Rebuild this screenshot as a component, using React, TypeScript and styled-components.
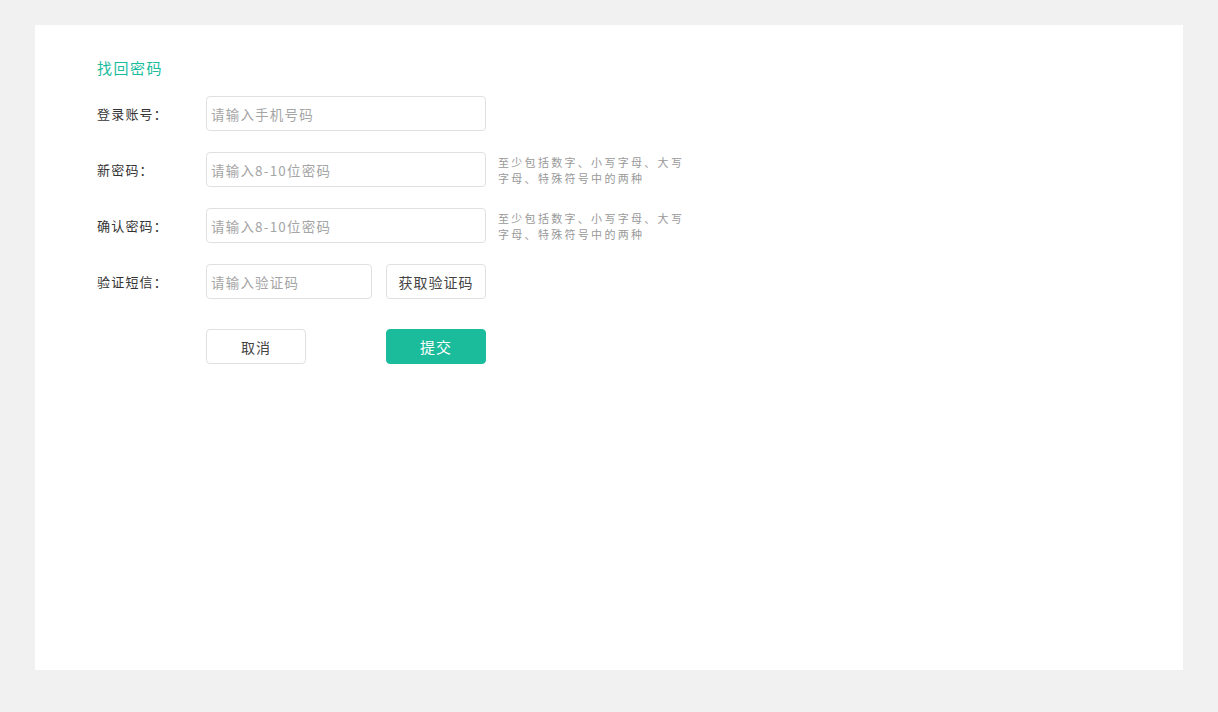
import React from "react";
import styled, { createGlobalStyle } from "styled-components";

const Global = createGlobalStyle`
  html, body { margin: 0; padding: 0; background: #f1f1f1; }
  body { font-family: "Noto Sans CJK SC", "Liberation Sans", sans-serif; }
  * { box-sizing: border-box; }
`;

const Page = styled.div`
  padding: 25px 35px 42px;
`;

const Panel = styled.div`
  background: #fff;
  height: 645px;
  padding: 34px 62px 0;
`;

const Title = styled.h2`
  margin: 0 0 19px;
  font-size: 15px;
  font-weight: normal;
  line-height: 18px;
  color: #1abc9c;
  letter-spacing: 1.5px;
`;

const Form = styled.div`
  display: flex;
  flex-direction: column;
  gap: 21px;
`;

const Row = styled.div<{ $top?: number }>`
  display: flex;
  align-items: center;
  height: 35px;
  margin-top: ${(p) => p.$top ?? 0}px;
`;

const Label = styled.label`
  width: 109px;
  font-size: 13px;
  color: #333;
  letter-spacing: 1.2px;
`;

const Input = styled.input<{ $w?: number }>`
  width: ${(p) => p.$w ?? 280}px;
  height: 35px;
  border: 1px solid #e0e0e0;
  border-radius: 4px;
  padding: 0 4px;
  font-family: inherit;
  font-size: 13.5px;
  letter-spacing: 1.2px;
  color: #333;
  outline: none;
  &::placeholder { color: #a5a5a5; }
`;

const Hint = styled.div`
  margin-left: 12px;
  width: 190px;
  font-size: 11px;
  line-height: 16px;
  letter-spacing: 2.3px;
  color: #999;
`;

const Button = styled.button<{ $primary?: boolean; $ml?: number }>`
  width: 100px;
  height: 35px;
  margin-left: ${(p) => p.$ml ?? 0}px;
  border-radius: 4px;
  font-family: inherit;
  font-size: ${(p) => (p.$primary ? 15 : 14)}px;
  letter-spacing: 1px;
  cursor: pointer;
  border: 1px solid ${(p) => (p.$primary ? "#1abc9c" : "#e0e0e0")};
  background: ${(p) => (p.$primary ? "#1abc9c" : "#fff")};
  color: ${(p) => (p.$primary ? "#fff" : "#444")};
`;

const Spacer = styled.div`
  width: 109px;
`;

export default function App() {
  return (
    <>
      <Global />
      <Page>
        <Panel>
          <Title>找回密码</Title>
          <Form>
            <Row>
              <Label>登录账号：</Label>
              <Input placeholder="请输入手机号码" />
            </Row>
            <Row>
              <Label>新密码：</Label>
              <Input type="password" placeholder="请输入8-10位密码" />
              <Hint>至少包括数字、小写字母、大写字母、特殊符号中的两种</Hint>
            </Row>
            <Row>
              <Label>确认密码：</Label>
              <Input type="password" placeholder="请输入8-10位密码" />
              <Hint>至少包括数字、小写字母、大写字母、特殊符号中的两种</Hint>
            </Row>
            <Row>
              <Label>验证短信：</Label>
              <Input $w={166} placeholder="请输入验证码" />
              <Button $ml={14}>获取验证码</Button>
            </Row>
            <Row $top={9}>
              <Spacer />
              <Button>取消</Button>
              <Button $primary $ml={80}>提交</Button>
            </Row>
          </Form>
        </Panel>
      </Page>
    </>
  );
}
